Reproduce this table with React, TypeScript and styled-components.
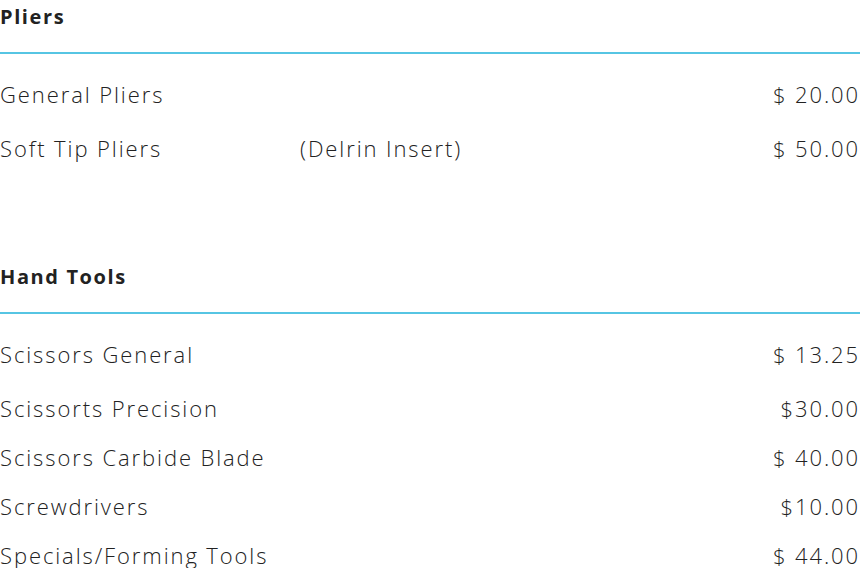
import React from 'react'
import styled, { createGlobalStyle } from 'styled-components'

const GlobalStyle = createGlobalStyle`
  html, body {
    background: #ffffff;
    margin: 0;
    padding: 0;
  }
  body {
    color: #222222;
    font-family: "Open Sans", Lato, sans-serif;
  }
`

const Page = styled.div`
  display: flex;
  flex-direction: column;
  padding-top: 5px;
  width: 860px;
`

const Section = styled.section`
  display: flex;
  flex-direction: column;
  & + & {
    margin-top: 104px;
  }
`

const Heading = styled.h2`
  border-bottom: 2px solid #56c5e3;
  font-size: 20px;
  font-weight: 700;
  letter-spacing: 1.6px;
  line-height: 24px;
  margin: 0;
  padding-bottom: 23px;
`

const List = styled.ul`
  display: flex;
  flex-direction: column;
  gap: 23px;
  list-style: none;
  margin: 0;
  padding: 27px 0 0;
`

const Row = styled.li<{ $extra?: boolean }>`
  align-items: center;
  display: grid;
  font-size: 22px;
  font-weight: 300;
  grid-template-columns: 300px 1fr auto;
  letter-spacing: 1.9px;
  line-height: 26px;
  margin-bottom: ${(props) => (props.$extra ? 5 : 0)}px;
`

const Price = styled.span`
  text-align: right;
`

interface Item {
  name: string
  note?: string
  price: string
}

const sections: { title: string; items: Item[] }[] = [
  {
    title: 'Pliers',
    items: [
      { name: 'General Pliers', price: '$ 20.00' },
      { name: 'Soft Tip Pliers', note: '(Delrin Insert)', price: '$ 50.00' },
    ],
  },
  {
    title: 'Hand Tools',
    items: [
      { name: 'Scissors General', price: '$ 13.25' },
      { name: 'Scissorts Precision', price: '$30.00' },
      { name: 'Scissors Carbide Blade', price: '$ 40.00' },
      { name: 'Screwdrivers', price: '$10.00' },
      { name: 'Specials/Forming Tools', price: '$ 44.00' },
    ],
  },
]

function App() {
  return (
    <Page>
      <GlobalStyle />
      {sections.map((section) => (
        <Section key={section.title}>
          <Heading>{section.title}</Heading>
          <List>
            {section.items.map((item, i) => (
              <Row key={item.name} $extra={i === 0}>
                <span>{item.name}</span>
                <span>{item.note}</span>
                <Price>{item.price}</Price>
              </Row>
            ))}
          </List>
        </Section>
      ))}
    </Page>
  )
}

export default App
